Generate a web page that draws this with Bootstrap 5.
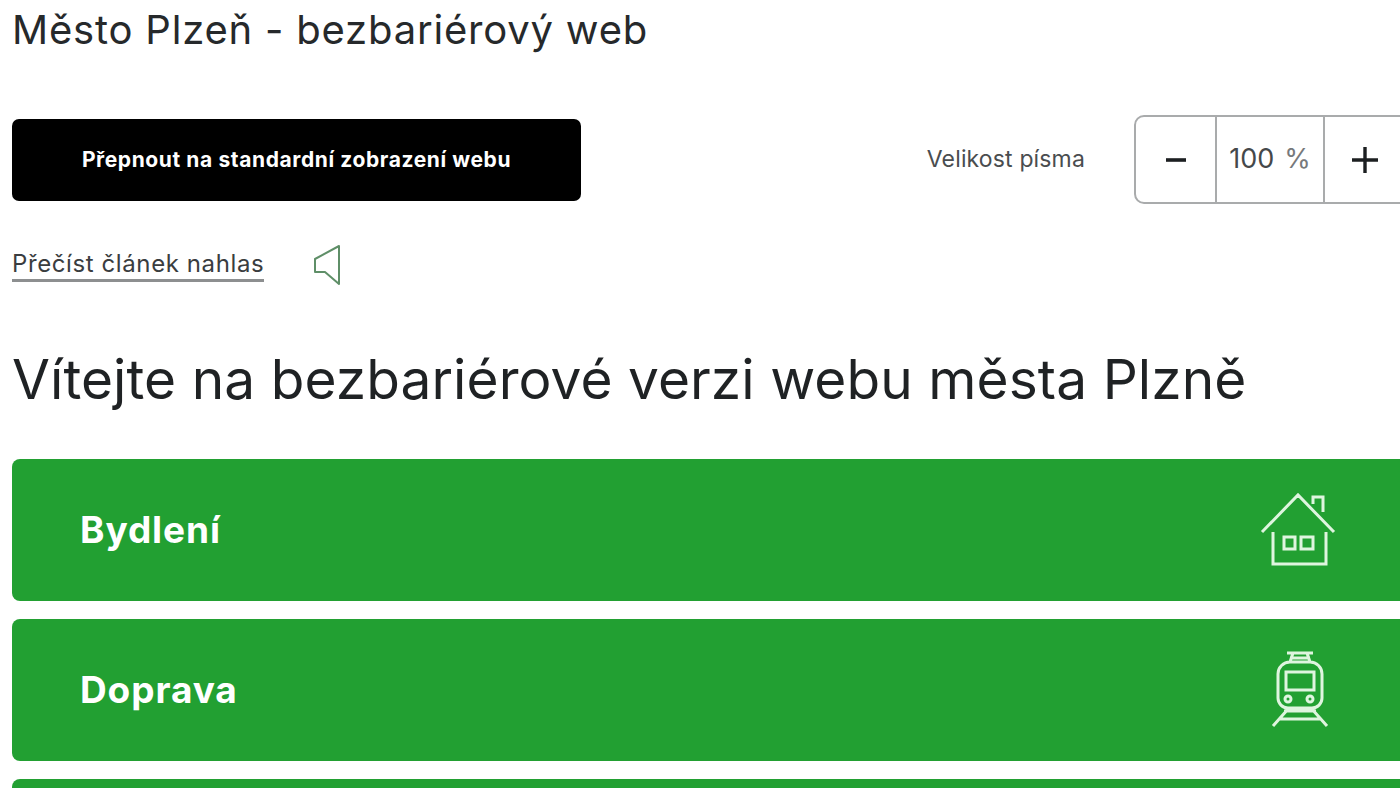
<!DOCTYPE html>
<html lang="cs">
<head>
<meta charset="utf-8">
<title>Město Plzeň - bezbariérový web</title>
<link href="https://cdn.jsdelivr.net/npm/bootstrap@5.3.0/dist/css/bootstrap.min.css" rel="stylesheet">
<style>
html, body { height: 788px; overflow: hidden; background: #fff; }
body { font-family: "Inter", "Liberation Sans", sans-serif; color: #26292b; }
.sheet { width: 1410px; padding-left: 12px; }
.site-name { font-size: 40px; font-weight: 400; line-height: 48px; margin: 6px 0 0; letter-spacing: .8px; }
.tools { margin-top: 61px; height: 89px; }
.switch-btn { width: 569px; height: 82px; background: #000; color: #fff; border: 0; border-radius: 7px; font-size: 21px; font-weight: 700; letter-spacing: .6px; }
.switch-btn:hover { background: #000; color: #fff; }
.size-label { font-size: 23px; color: #4a4d4f; margin-right: 49px; letter-spacing: .15px; }
.stepper { width: 276px; height: 89px; border: 2px solid #a9abac; border-radius: 10px; }
.step-btn { width: 79px; background: none; border: 0; color: #1c1f21; padding: 0; }
.step-val { width: 110px; border: solid #a9abac; border-width: 0 2px; font-size: 27px; color: #45484a; }
.step-val span { color: #77797b; margin-left: 10px; }
.read-row { margin-top: 35px; height: 52px; }
.read-link { color: #3a3d3f; font-size: 24px; line-height: 30px; text-decoration: none; border-bottom: 3px solid #8d8f90; margin-right: 48px; letter-spacing: .6px; }
.page-title { font-size: 55px; font-weight: 400; line-height: 68px; margin: 54px 0 46px; color: #1f2224; letter-spacing: .07px; }
.tile-list { gap: 18px; }
.tile { height: 142px; background: #22a032; color: #fff; border-radius: 8px; padding: 0 72px 0 68px; text-decoration: none; font-size: 37px; font-weight: 700; letter-spacing: .9px; }
.tile:hover { color: #fff; }
.tile svg { fill: none; stroke: #dff5df; stroke-width: 3; }
</style>
</head>
<body>
<div class="sheet">
  <p class="site-name">Město Plzeň - bezbariérový web</p>

  <div class="tools d-flex align-items-center justify-content-between">
    <a class="switch-btn btn d-flex align-items-center justify-content-center" href="#">Přepnout na standardní zobrazení webu</a>
    <div class="d-flex align-items-center">
      <span class="size-label">Velikost písma</span>
      <div class="stepper d-flex align-items-stretch">
        <button class="step-btn d-flex align-items-center justify-content-center" type="button" aria-label="Zmenšit">
          <svg width="24" height="24" viewBox="0 0 24 24"><path d="M2 12h20" stroke="currentColor" stroke-width="3.6"/></svg>
        </button>
        <div class="step-val d-flex align-items-center justify-content-center">100<span>%</span></div>
        <button class="step-btn d-flex align-items-center justify-content-center" type="button" aria-label="Zvětšit">
          <svg width="30" height="30" viewBox="0 0 30 30"><path d="M2 15h26M15 2v26" stroke="currentColor" stroke-width="3.4"/></svg>
        </button>
      </div>
    </div>
  </div>

  <div class="read-row d-flex align-items-center">
    <a class="read-link" href="#">Přečíst článek nahlas</a>
    <svg width="30" height="42" viewBox="0 0 30 42" fill="none" stroke="#5f8f68" stroke-width="2"><path d="M27 2v38L13 28H3V15z" stroke-linejoin="round"/></svg>
  </div>

  <h1 class="page-title">Vítejte na bezbariérové verzi webu města Plzně</h1>

  <div class="tile-list d-flex flex-column">
    <a class="tile d-flex align-items-center justify-content-between" href="#">Bydlení
      <svg width="78" height="76" viewBox="0 0 78 76"><path d="M2 40 38 3l36 37M53 12V5h10v15M13 40v32h53V40M24 45h11v12H24zM41 45h12v12H41z"/></svg>
    </a>
    <a class="tile d-flex align-items-center justify-content-between" href="#">Doprava
      <svg width="78" height="78" viewBox="0 0 78 78"><path d="M27 2h26M33 2l-3 9M47 2l3 9M30 7h20M30 11h20a12 12 0 0 1 12 12v24a10 10 0 0 1-10 10H28a10 10 0 0 1-10-10V23a12 12 0 0 1 12-12zM26 21h28v18H26zM29 57 13 75M51 57l16 18M24 60h32M19 68h42"/><circle cx="28" cy="48" r="3"/><circle cx="50" cy="48" r="3"/></svg>
    </a>
    <a class="tile d-flex align-items-center justify-content-between" href="#" aria-hidden="true"></a>
  </div>
</div>
</body>
</html>
